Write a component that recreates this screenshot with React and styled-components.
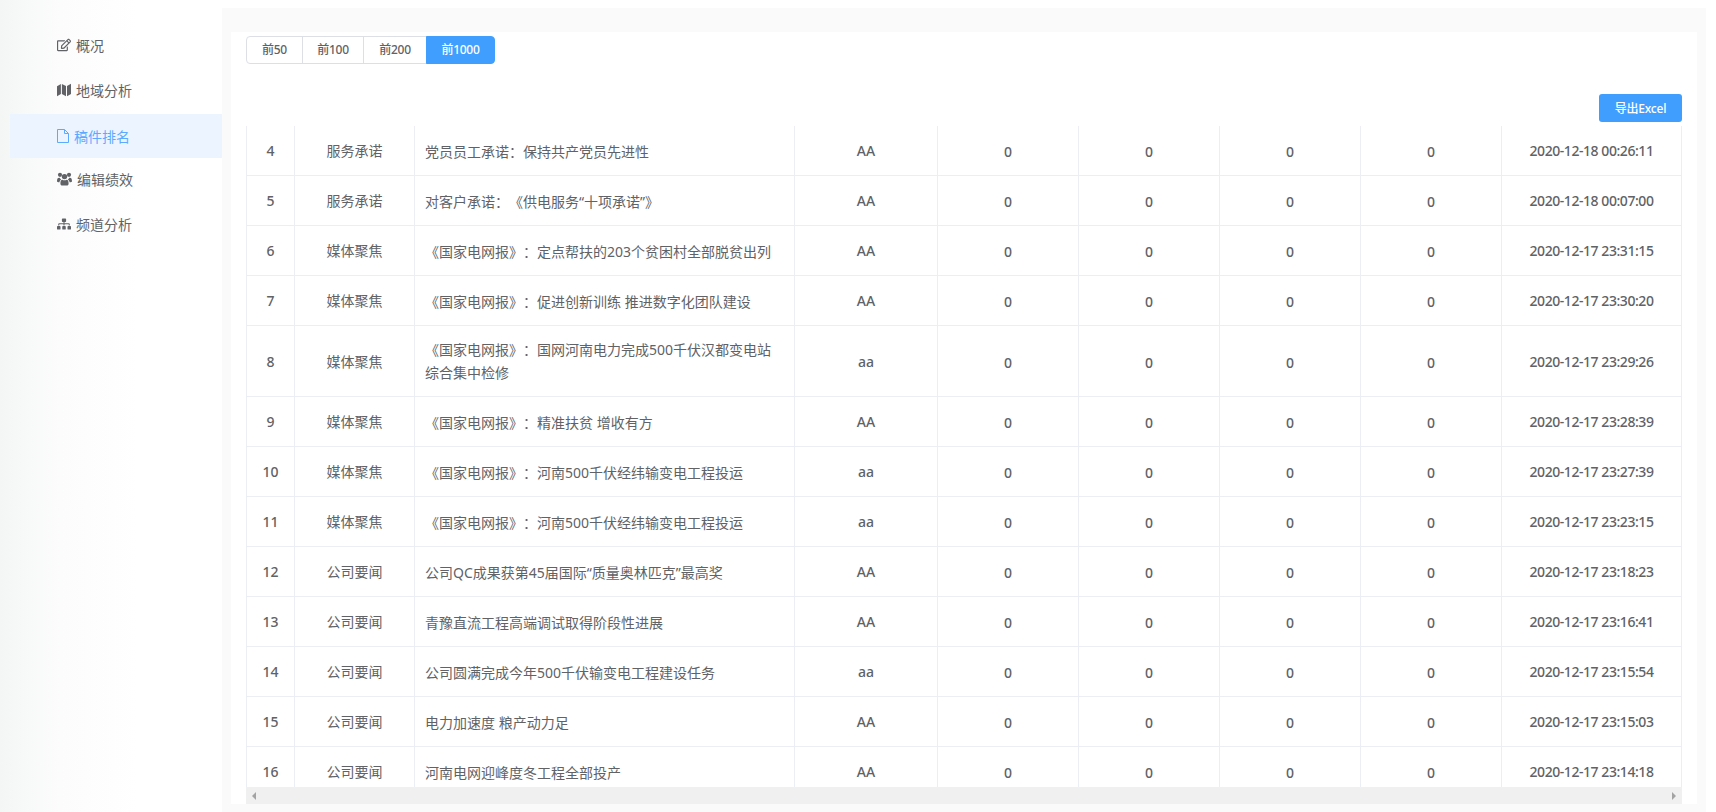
import React from 'react';
import styled, { createGlobalStyle } from 'styled-components';
import { FaRegEdit, FaSitemap } from 'react-icons/fa';

const GlobalStyle = createGlobalStyle`
    html, body {
        margin: 0;
        height: 100%;
        background: #fff;
        overflow: hidden;
    }
    body {
        font-family: 'Noto Sans', 'Noto Sans CJK SC', sans-serif;
        font-size: 14px;
        color: #606266;
        text-spacing-trim: space-all;
    }
`

const Page = styled.div`
    display: flex;
    height: 812px;
`

const Sidebar = styled.aside`
    width: 222px;
    flex: none;
    padding: 24px 0 0 10px;
    box-sizing: border-box;
    background: linear-gradient(90deg, #f4f6f6 0, #fcfcfc 60px, #fff 140px);
`

const NavItem = styled.div`
    height: ${p => (p.$active ? 44 : 45)}px;
    box-sizing: border-box;
    padding: 0 0 ${p => (p.$active ? 1 : 3)}px 47px;
    display: flex;
    align-items: center;
    font-size: 14px;
    color: ${p => (p.$active ? '#5caaff' : '#606266')};
    background: ${p => (p.$active ? '#ecf5ff' : 'transparent')};

    svg {
        width: ${p => p.$iconWidth}px;
        height: 14px;
        margin-right: 5px;
        flex: none;
    }
`

const Main = styled.main`
    width: 1484px;
    flex: none;
    margin-top: 8px;
    padding: 24px 9px 8px;
    box-sizing: border-box;
    background: #fafafa;
    display: flex;
`

const Card = styled.div`
    flex: 1;
    min-width: 0;
    background: #fff;
    padding: 4px 15px 0;
    display: flex;
    flex-direction: column;
`

const Group = styled.div`
    display: flex;
    height: 28px;
`

const GroupButton = styled.button`
    height: 28px;
    width: ${p => p.$width}px;
    padding: 0;
    margin: 0 0 0 -1px;
    border: 1px solid ${p => (p.$active ? '#409eff' : '#dcdfe6')};
    background: ${p => (p.$active ? '#409eff' : '#fff')};
    color: ${p => (p.$active ? '#fff' : '#606266')};
    font-family: inherit;
    font-size: 12px;
    font-weight: 500;
    letter-spacing: -0.3px;
    line-height: 1;

    &:first-child {
        margin-left: 0;
        border-radius: 4px 0 0 4px;
    }
    &:last-child {
        border-radius: 0 4px 4px 0;
    }
`

const Toolbar = styled.div`
    display: flex;
    justify-content: flex-end;
    margin-top: 30px;
    margin-bottom: 4px;
`

const ExportButton = styled.button`
    width: 83px;
    height: 28px;
    padding: 0;
    border: 0;
    border-radius: 3px;
    background: #409eff;
    color: #fff;
    font-family: inherit;
    font-size: 12px;
    font-weight: 500;
    letter-spacing: -0.2px;
`

const TableWrap = styled.div`
    height: 661px;
    overflow: hidden;
    border-left: 1px solid #ebeef5;
`

const Table = styled.table`
    width: 1435px;
    table-layout: fixed;
    border-collapse: separate;
    border-spacing: 0;
`

const Cell = styled.td`
    box-sizing: border-box;
    height: 50px;
    padding: 12px 10px;
    line-height: 23px;
    text-align: center;
    border-right: 1px solid #ebeef5;
    border-bottom: 1px solid #ebeef5;
    color: #606266;
`

const TitleCell = styled(Cell)`
    text-align: left;
    white-space: pre-line;
`

const TitleText = styled.span`
    position: relative;
    top: ${p => (p.$wrapped ? 0 : 1)}px;
`

const NumCell = styled(Cell)`
    font-weight: 500;
`

const DateCell = styled(NumCell)`
    letter-spacing: -0.44px;
`

const ZeroText = styled.span`
    position: relative;
    top: 1px;
`

const ScrollTrack = styled.div`
    height: 17px;
    flex: none;
    background: #f0f0f0;
    display: flex;
    align-items: center;
    justify-content: space-between;
    padding: 0 6px;
`

const Arrow = styled.span`
    width: 0;
    height: 0;
    border-top: 4px solid transparent;
    border-bottom: 4px solid transparent;
    border-right: ${p => (p.$dir === 'left' ? '4px solid #a3a3a3' : '0')};
    border-left: ${p => (p.$dir === 'right' ? '4px solid #a3a3a3' : '0')};
`

const MapIcon = () => (
    <svg viewBox="0 0 14 14" fill="currentColor">
        <path d="M0 3.2 L3.9 1 V11 L0 13.2Z" />
        <path d="M4.9 1 L9 3 V13.2 L4.9 11Z" />
        <path d="M10 3 L14 .8 V11 L10 13.2Z" />
    </svg>
);

const FileIcon = () => (
    <svg viewBox="0 0 12 14" fill="none" stroke="currentColor" strokeWidth="1">
        <path d="M.5 .5 H7.5 L11.5 4.5 V13.5 H.5Z" />
        <path d="M7.5 .5 V4.5 H11.5" />
    </svg>
);

const UsersIcon = () => (
    <svg viewBox="0 0 15 14" fill="currentColor">
        <circle cx="3" cy="2.8" r="2.1" />
        <circle cx="12" cy="2.8" r="2.1" />
        <circle cx="7.5" cy="4.6" r="2.7" />
        <path d="M0 9.2 C0 6.8 .8 5.6 2.6 5.8 C3 6.6 3.6 7.2 4.2 7.6 C3.2 8.2 2.6 9.2 2.5 10.2 C1 10.2 0 10 0 9.2Z" />
        <path d="M15 9.2 C15 6.8 14.2 5.6 12.4 5.8 C12 6.6 11.4 7.2 10.8 7.6 C11.8 8.2 12.4 9.2 12.5 10.2 C14 10.2 15 10 15 9.2Z" />
        <path d="M3.4 11.4 C3.4 9 4.2 7.6 5.4 7.8 C6.5 8.5 8.5 8.5 9.6 7.8 C10.8 7.6 11.6 9 11.6 11.4 C11.6 13 10.6 13.6 9.6 13.6 H5.4 C4.4 13.6 3.4 13 3.4 11.4Z" />
    </svg>
);

const widths = [48, 120, 380, 143, 141, 141, 141, 141, 180];

const nav = [
    { icon: FaRegEdit, label: '概况', iconWidth: 14 },
    { icon: MapIcon, label: '地域分析', iconWidth: 14 },
    { icon: FileIcon, label: '稿件排名', iconWidth: 12, active: true },
    { icon: UsersIcon, label: '编辑绩效', iconWidth: 15 },
    { icon: FaSitemap, label: '频道分析', iconWidth: 14 },
];

const ranges = [
    { label: '前50', width: 57 },
    { label: '前100', width: 62 },
    { label: '前200', width: 64 },
    { label: '前1000', width: 69, active: true },
];

const rows = [
    [4, '服务承诺', '党员员工承诺：保持共产党员先进性', 'AA', '2020-12-18 00:26:11'],
    [5, '服务承诺', '对客户承诺：《供电服务“十项承诺”》', 'AA', '2020-12-18 00:07:00'],
    [6, '媒体聚焦', '《国家电网报》：定点帮扶的203个贫困村全部脱贫出列', 'AA', '2020-12-17 23:31:15'],
    [7, '媒体聚焦', '《国家电网报》：促进创新训练 推进数字化团队建设', 'AA', '2020-12-17 23:30:20'],
    [8, '媒体聚焦', '《国家电网报》：国网河南电力完成500千伏汉都变电站\n综合集中检修', 'aa', '2020-12-17 23:29:26'],
    [9, '媒体聚焦', '《国家电网报》：精准扶贫 增收有方', 'AA', '2020-12-17 23:28:39'],
    [10, '媒体聚焦', '《国家电网报》：河南500千伏经纬输变电工程投运', 'aa', '2020-12-17 23:27:39'],
    [11, '媒体聚焦', '《国家电网报》：河南500千伏经纬输变电工程投运', 'aa', '2020-12-17 23:23:15'],
    [12, '公司要闻', '公司QC成果获第45届国际“质量奥林匹克”最高奖', 'AA', '2020-12-17 23:18:23'],
    [13, '公司要闻', '青豫直流工程高端调试取得阶段性进展', 'AA', '2020-12-17 23:16:41'],
    [14, '公司要闻', '公司圆满完成今年500千伏输变电工程建设任务', 'aa', '2020-12-17 23:15:54'],
    [15, '公司要闻', '电力加速度 粮产动力足', 'AA', '2020-12-17 23:15:03'],
    [16, '公司要闻', '河南电网迎峰度冬工程全部投产', 'AA', '2020-12-17 23:14:18'],
];

function App() {
    return (
        <Page>
            <GlobalStyle />
            <Sidebar>
                {nav.map(item => (
                    <NavItem key={item.label} $active={item.active} $iconWidth={item.iconWidth}>
                        <item.icon />
                        {item.label}
                    </NavItem>
                ))}
            </Sidebar>
            <Main>
                <Card>
                    <Group>
                        {ranges.map(r => (
                            <GroupButton key={r.label} $active={r.active} $width={r.width}>{r.label}</GroupButton>
                        ))}
                    </Group>
                    <Toolbar>
                        <ExportButton>导出Excel</ExportButton>
                    </Toolbar>
                    <TableWrap>
                        <Table>
                            <colgroup>
                                {widths.map((w, i) => <col key={i} width={w} />)}
                            </colgroup>
                            <tbody>
                                {rows.map(row => (
                                    <tr key={row[0]}>
                                        <NumCell>{row[0]}</NumCell>
                                        <Cell>{row[1]}</Cell>
                                        <TitleCell>
                                            <TitleText $wrapped={row[2].includes('\n')}>{row[2]}</TitleText>
                                        </TitleCell>
                                        <NumCell>{row[3]}</NumCell>
                                        {[0, 1, 2, 3].map(i => (
                                            <NumCell key={i}><ZeroText>0</ZeroText></NumCell>
                                        ))}
                                        <DateCell>{row[4]}</DateCell>
                                    </tr>
                                ))}
                            </tbody>
                        </Table>
                    </TableWrap>
                    <ScrollTrack>
                        <Arrow $dir="left" />
                        <Arrow $dir="right" />
                    </ScrollTrack>
                </Card>
            </Main>
        </Page>
    );
}

export default App;
